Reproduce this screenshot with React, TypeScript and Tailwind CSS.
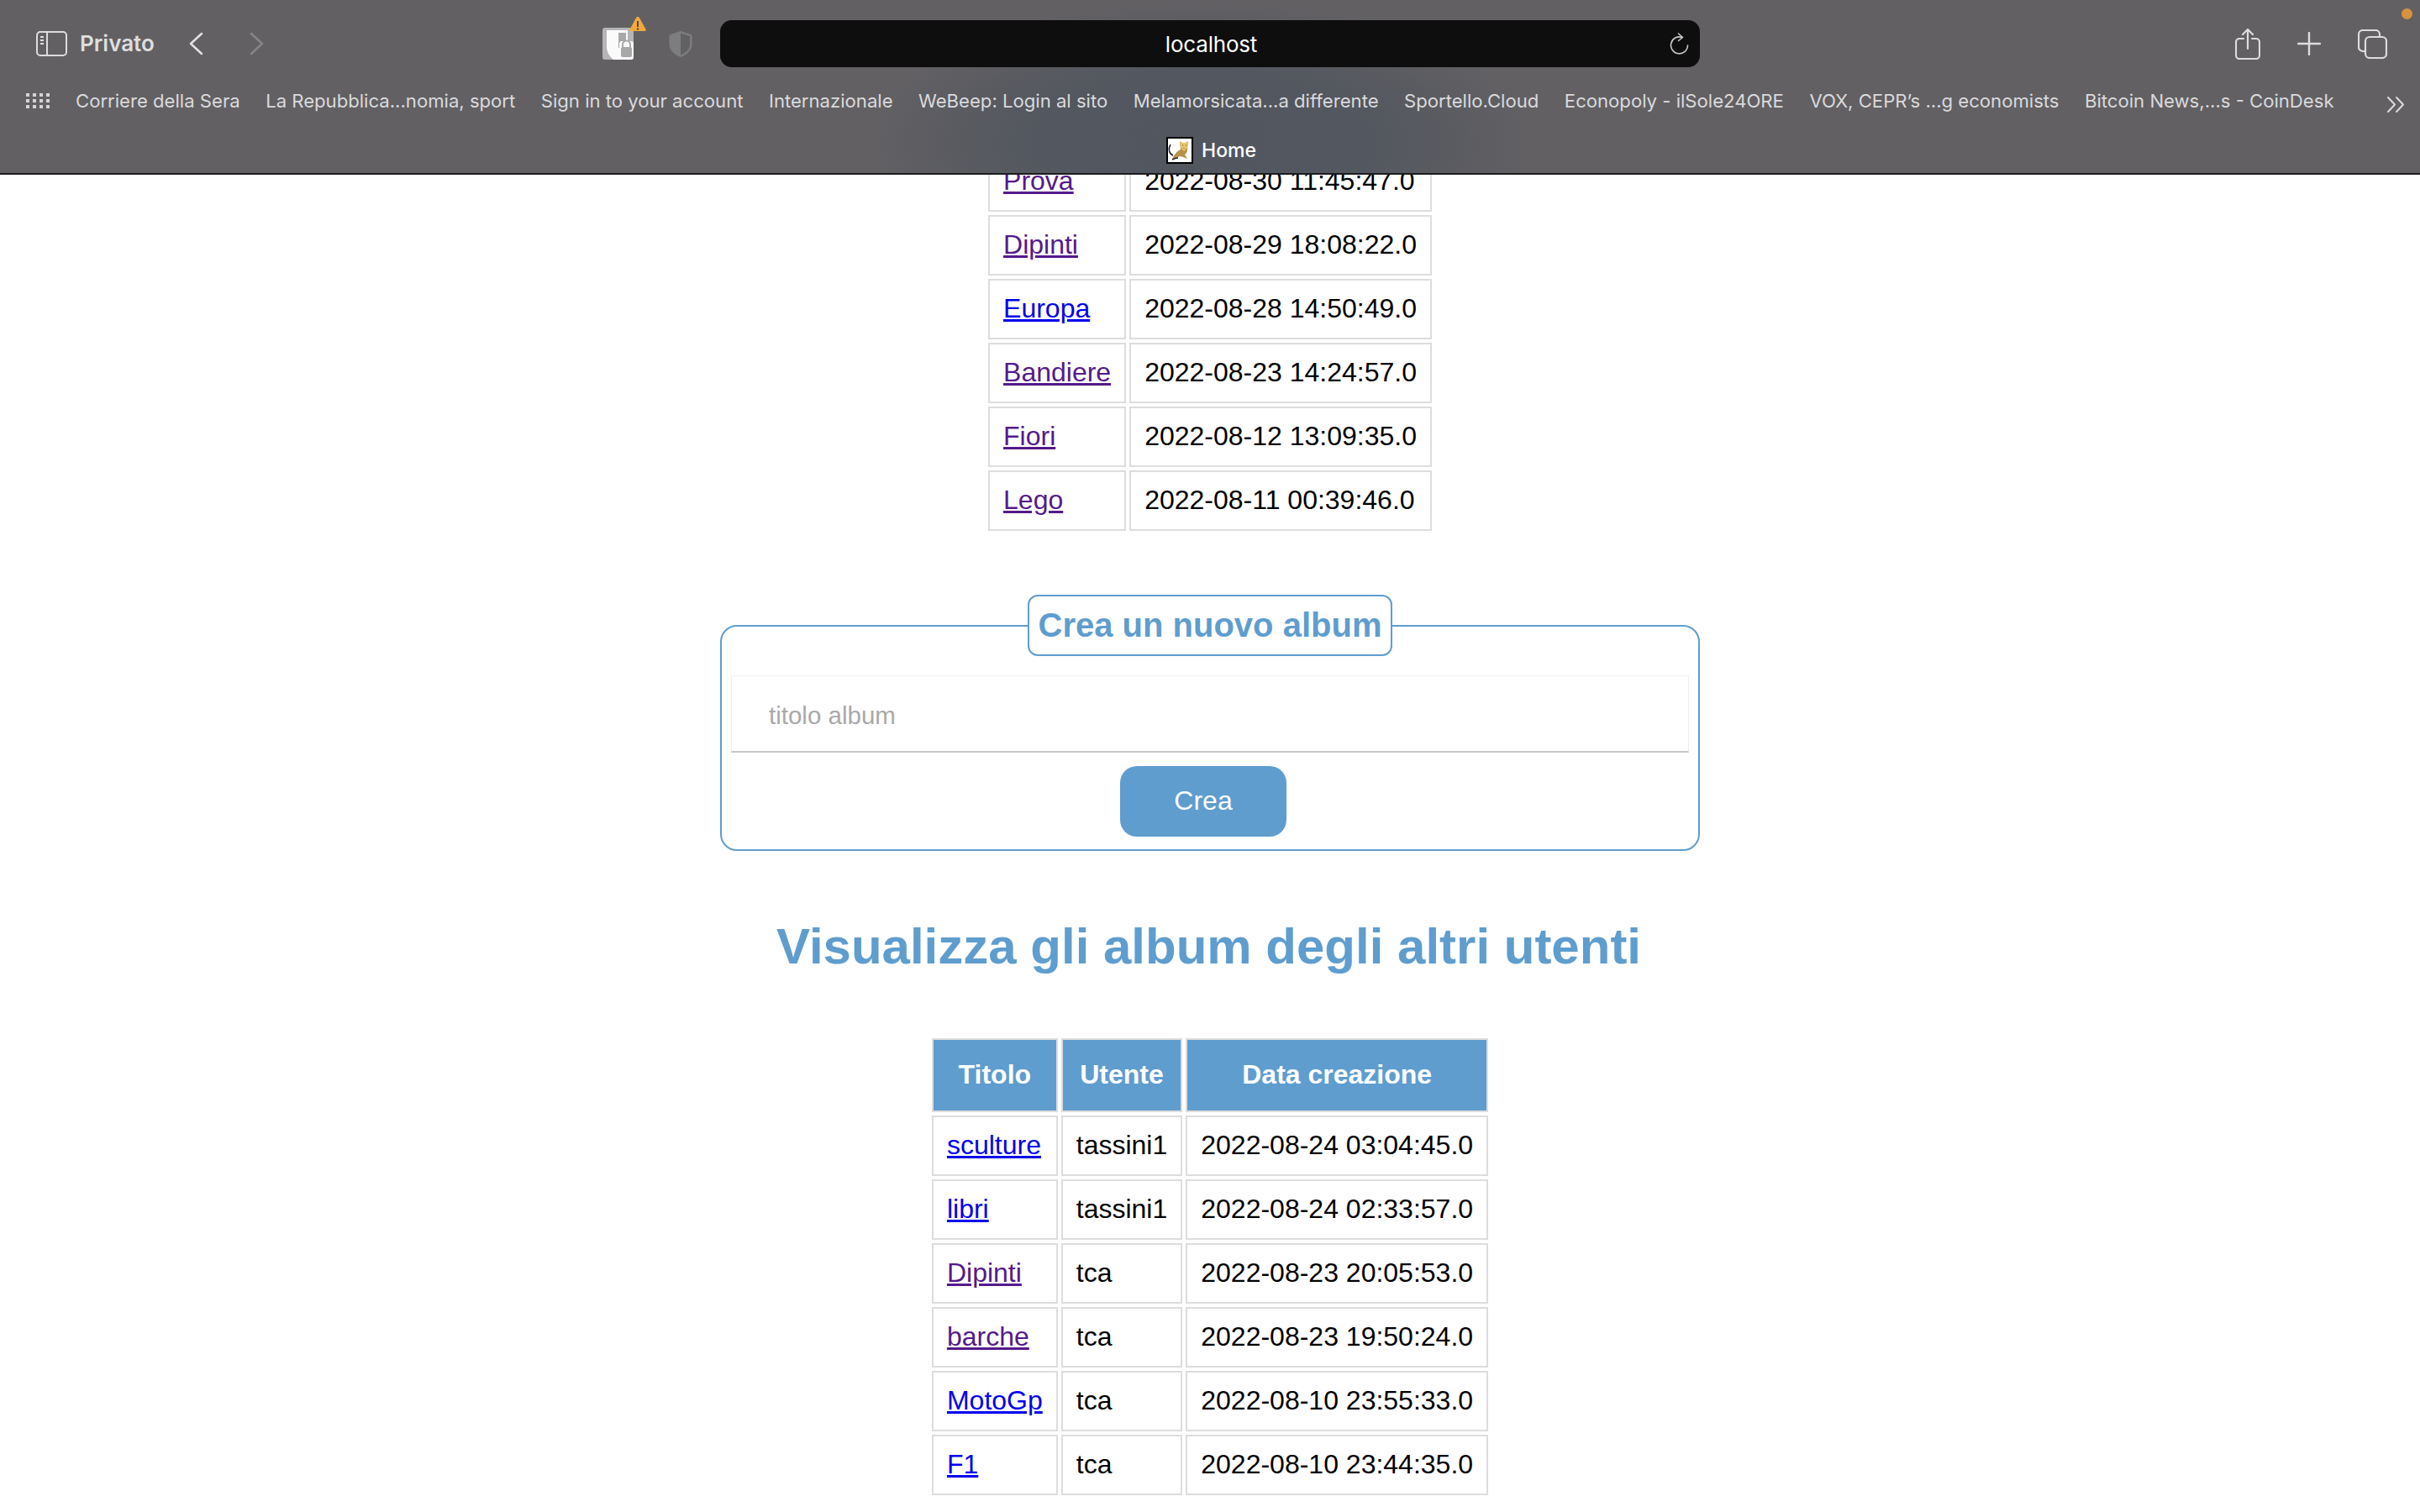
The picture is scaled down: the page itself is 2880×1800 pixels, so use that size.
const blue = 'text-[#0000ee]';
const visited = 'text-[#551a8b]';

const myAlbums = [
  { title: 'Prova', date: '2022-08-30 11:45:47.0', link: visited },
  { title: 'Dipinti', date: '2022-08-29 18:08:22.0', link: visited },
  { title: 'Europa', date: '2022-08-28 14:50:49.0', link: blue },
  { title: 'Bandiere', date: '2022-08-23 14:24:57.0', link: visited },
  { title: 'Fiori', date: '2022-08-12 13:09:35.0', link: visited },
  { title: 'Lego', date: '2022-08-11 00:39:46.0', link: visited },
];

const otherAlbums = [
  { title: 'sculture', user: 'tassini1', date: '2022-08-24 03:04:45.0', link: blue },
  { title: 'libri', user: 'tassini1', date: '2022-08-24 02:33:57.0', link: blue },
  { title: 'Dipinti', user: 'tca', date: '2022-08-23 20:05:53.0', link: visited },
  { title: 'barche', user: 'tca', date: '2022-08-23 19:50:24.0', link: visited },
  { title: 'MotoGp', user: 'tca', date: '2022-08-10 23:55:33.0', link: blue },
  { title: 'F1', user: 'tca', date: '2022-08-10 23:44:35.0', link: blue },
];

const bookmarks = [
  'Corriere della Sera',
  'La Repubblica...nomia, sport',
  'Sign in to your account',
  'Internazionale',
  'WeBeep: Login al sito',
  'Melamorsicata...a differente',
  'Sportello.Cloud',
  'Econopoly - ilSole24ORE',
  'VOX, CEPR’s ...g economists',
  'Bitcoin News,...s - CoinDesk',
];

const td = 'border-2 border-[#ddd] px-4 pt-[15px] pb-[17px] text-left align-middle text-[32px] leading-[36px] text-black';
const th = 'border-2 border-[#ddd] bg-[#5f9dce] px-4 pt-[23px] pb-[25px] text-center text-[32px] font-bold leading-[36px] text-white';

const Toolbar = () => (
  <header className="absolute inset-x-0 top-0 flex h-[208px] flex-col border-b-2 border-[#1c1c1e] bg-[#626063] bg-[radial-gradient(ellipse_400px_170px_at_1430px_170px,#52565f_0%,#53575f_50%,#626063_100%)] font-['Inter',sans-serif]">
    {/* Top row */}
    <div className="flex h-[104px] items-center">
      <div className="flex w-[857px] items-center pl-[43px]">
        <svg width="37" height="30" viewBox="0 0 37 30" fill="none" stroke="#dcdcdc" strokeWidth="2">
          <rect x="1" y="1" width="35" height="28" rx="4" />
          <path d="M13 1v28" />
          <path d="M5 7h4M5 11h4M5 15h4" strokeWidth="2" />
        </svg>
        <span className="ml-[15px] text-[26px] font-semibold leading-none text-[#dedede]">Privato</span>
        <svg className="ml-[40px]" width="18" height="28" viewBox="0 0 18 28" fill="none" stroke="#e2e2e2" strokeWidth="2.5" strokeLinecap="round" strokeLinejoin="round">
          <path d="M16 2 3 14l13 12" />
        </svg>
        <svg className="ml-[55px]" width="18" height="28" viewBox="0 0 18 28" fill="none" stroke="#858487" strokeWidth="2.5" strokeLinecap="round" strokeLinejoin="round">
          <path d="M2 2l13 12L2 26" />
        </svg>
        <svg className="ml-[401px] -mt-[12px]" width="53" height="52" viewBox="0 0 53 52">
          <rect x="1" y="13" width="37" height="38" rx="3" fill="#b5b5b5" />
          <path d="M6 16h25v35H14c-5-4-8-9-8-16z" fill="#fafafa" />
          <rect x="20" y="19" width="9" height="18" fill="#a8a8a8" />
          <rect x="21" y="29" width="17" height="22" rx="3" fill="#fafafa" />
          <path d="M25 36v-3a4.5 4.5 0 0 1 9 0v3" fill="none" stroke="#a8a8a8" strokeWidth="2" />
          <rect x="23" y="36" width="13" height="12" rx="2" fill="#a8a8a8" />
          <path d="M43 0c1 0 1.600.5 2 1.300l7.500 13.500c.6 1.200 0 2.200-1.300 2.200H35c-1.300 0-2-1-1.300-2.200L41 1.300C41.400.5 42 0 43 0z" fill="#f2a93b" />
          <path d="M43 5v7" stroke="#5d4a2d" strokeWidth="2" />
          <circle cx="43" cy="14.500" r="1.200" fill="#5d4a2d" />
        </svg>
        <svg className="ml-[27px]" width="28" height="33" viewBox="0 0 28 33">
          <path d="M14 1 26 5c1 .3 1.500 1 1.500 2v10c0 7-6 12-13.500 15C6.500 29 .5 24 .5 17V7C.5 6 1 5.300 2 5z" fill="#7d7c7f" />
          <path d="M14 3.500 25 7v10c0 5.500-5 10-11 12.500z" fill="#626063" />
        </svg>
      </div>
      <div className="relative flex h-[56px] w-[1166px] items-center justify-center rounded-[14px] bg-[#0e0e0e]">
        <span className="ml-[3px] mt-[2px] text-[26px] leading-none tracking-[-0.2px] text-white">localhost</span>
        <svg className="absolute right-[13px] top-[15px]" width="23" height="26" viewBox="0 0 23 26" fill="none" stroke="#c9c9c9" strokeWidth="1.600" strokeLinecap="round" strokeLinejoin="round">
          <path d="M15 5.500A10 10 0 1 0 21.500 15" />
          <path d="M10.500 1 15.500 5.500 10.500 9.500" />
        </svg>
      </div>
      <div className="flex flex-1 items-center pl-[637px]">
        <svg width="30" height="37" viewBox="0 0 30 37" fill="none" stroke="#dcdcdc" strokeWidth="2.200" strokeLinecap="round" strokeLinejoin="round">
          <path d="M10 12H5a4 4 0 0 0-4 4v16a4 4 0 0 0 4 4h20a4 4 0 0 0 4-4V16a4 4 0 0 0-4-4h-5" />
          <path d="M15 24V2M9 7l6-6 6 6" />
        </svg>
        <svg className="ml-[44px]" width="28" height="28" viewBox="0 0 28 28" fill="none" stroke="#dcdcdc" strokeWidth="2.400" strokeLinecap="round">
          <path d="M14 1v26M1 14h26" />
        </svg>
        <svg className="ml-[44px]" width="35" height="35" viewBox="0 0 35 35" fill="none" stroke="#dcdcdc" strokeWidth="2.200">
          <path d="M8 26H6a5 5 0 0 1-5-5V6a5 5 0 0 1 5-5h15a5 5 0 0 1 5 5v2" />
          <rect x="9" y="9" width="25" height="25" rx="5" />
        </svg>
      </div>
    </div>

    {/* Favorites bar */}
    <div className="flex h-[32px] items-center pl-[31px]">
      <div className="grid grid-cols-4 gap-x-[4px] gap-y-[3px]">
        {Array.from({ length: 12 }).map((_, i) => (
          <span key={i} className="h-[4px] w-[4px] bg-[#d4d4d6]" />
        ))}
      </div>
      <div className="ml-[31px] flex gap-[30.500px]">
        {bookmarks.map((name) => (
          <span key={name} className="whitespace-nowrap text-[22.120px] leading-none text-[#dadadc]">
            {name}
          </span>
        ))}
      </div>
      <svg className="ml-auto mr-[18px] mt-[8px]" width="22" height="21" viewBox="0 0 22 21" fill="none" stroke="#dcdcdc" strokeWidth="2" strokeLinecap="round" strokeLinejoin="round">
        <path d="M2 2l8 8.500-8 8.500M12 2l8 8.500-8 8.500" />
      </svg>
    </div>

    {/* Tab */}
    <div className="mt-[27px] flex items-center justify-center pl-[3px]">
      <svg width="32" height="32" viewBox="0 0 32 32">
        <rect x="1" y="1" width="30" height="30" fill="#fff" stroke="#000" strokeWidth="2" />
        <path d="M7 26c3-6 6-9 10-11l-1-10 3 2h4l3-2-1 10c0 3-1 5-3 6l3 5-5-2-4-1-4 2z" fill="#b8914a" />
        <path d="M16 5l3 2h4l3-2-1 8-4 4-4-4z" fill="#e8c56a" />
        <path d="M8 22C3 20 2 14 5 9" fill="none" stroke="#222" strokeWidth="1.500" />
        <path d="M7 27c2-1 4-2 7-2" fill="none" stroke="#222" strokeWidth="1.500" />
        <path d="M19 10h1M23 10h1M21 13v1" stroke="#553" strokeWidth="1" />
      </svg>
      <span className="ml-[10px] text-[23px] font-medium leading-none text-white">Home</span>
    </div>
  </header>
);

export default function App() {
  return (
    <div className="relative h-[1800px] overflow-hidden bg-white font-['Liberation_Sans',Arial,sans-serif]">
      <main className="pt-[176px]">
        <table className="mx-auto border-separate border-spacing-1">
          <tbody>
            {myAlbums.map((album) => (
              <tr key={album.title}>
                <td className={td}>
                  <a href="#" className={`underline ${album.link}`}>{album.title}</a>
                </td>
                <td className={td}>{album.date}</td>
              </tr>
            ))}
          </tbody>
        </table>

        <fieldset className="mx-auto mt-[72px] w-[1166px] rounded-[20px] border-2 border-[#5f9dce] px-[11px] pb-[15px]">
          <legend className="mx-auto rounded-[12px] border-2 border-[#5f9dce] bg-white px-[11px] py-[12px] text-[40px] font-bold leading-[45px] text-[#5f9dce]">
            Crea un nuovo album
          </legend>
          <input
            placeholder="titolo album"
            className="mt-[23px] block h-[92px] w-full border border-b-2 border-[#eeeeee] border-b-[#c8c8c8] pl-[44px] pt-[4px] text-[29.500px] outline-none placeholder:text-[#a9a9a9]"
          />
          <div className="mt-4 flex justify-center pr-4">
            <button className="h-[84px] w-[198px] rounded-[20px] bg-[#5f9dce] pb-[3px] text-[32px] text-white">Crea</button>
          </div>
        </fieldset>

        <h1 className="mt-[79px] pr-[3px] text-center text-[60px] font-bold leading-[69px] text-[#5f9dce]">
          Visualizza gli album degli altri utenti
        </h1>

        <table className="mx-auto mt-[71px] border-separate border-spacing-1">
          <thead>
            <tr>
              <th className={th}>Titolo</th>
              <th className={th}>Utente</th>
              <th className={th}>Data creazione</th>
            </tr>
          </thead>
          <tbody>
            {otherAlbums.map((album) => (
              <tr key={album.title}>
                <td className={td}>
                  <a href="#" className={`underline ${album.link}`}>{album.title}</a>
                </td>
                <td className={td}>{album.user}</td>
                <td className={td}>{album.date}</td>
              </tr>
            ))}
          </tbody>
        </table>
      </main>

      <span className="absolute right-[9px] top-[10px] z-10 h-[13px] w-[13px] rounded-full bg-[#d8923f]" />
      <Toolbar />
    </div>
  );
}
